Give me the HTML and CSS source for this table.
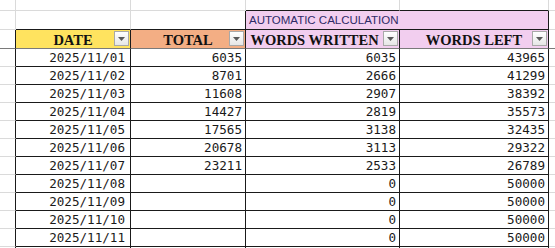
FILE: index.html
```html
<!DOCTYPE html>
<html>
<head>
<meta charset="utf-8">
<link rel="stylesheet" href="styles.css">
</head>
<body>
<div class="sheet">
  <!-- row 1 -->
  <div class="c"></div><div class="c"></div><div class="c"></div>
  <div class="c db"></div><div class="c db"></div><div class="c"></div>
  <!-- row 2 -->
  <div class="c"></div><div class="c db"></div><div class="c db dr"></div>
  <div class="c auto db dr">AUTOMATIC CALCULATION</div><div class="c"></div>
  <!-- row 3: headers -->
  <div class="c dr fz"></div>
  <div class="c h yellow dr fz"><span>DATE</span><i class="btn"><svg width="7" height="4" viewBox="0 0 7 4"><path d="M0 0H7L3.5 4Z"/></svg></i></div>
  <div class="c h salmon dr fz"><span>TOTAL</span><i class="btn"><svg width="7" height="4" viewBox="0 0 7 4"><path d="M0 0H7L3.5 4Z"/></svg></i></div>
  <div class="c h purple dr fz shift"><span>WORDS WRITTEN</span><i class="btn"><svg width="7" height="4" viewBox="0 0 7 4"><path d="M0 0H7L3.5 4Z"/></svg></i></div>
  <div class="c h purple dr fz"><span>WORDS LEFT</span><i class="btn"><svg width="7" height="4" viewBox="0 0 7 4"><path d="M0 0H7L3.5 4Z"/></svg></i></div>
  <div class="c fz"></div>

  <div class="c dr"></div><div class="c d dt">2025/11/01</div><div class="c d">6035</div><div class="c d">6035</div><div class="c d">43965</div><div class="c"></div>
  <div class="c dr"></div><div class="c d dt">2025/11/02</div><div class="c d">8701</div><div class="c d">2666</div><div class="c d">41299</div><div class="c"></div>
  <div class="c dr"></div><div class="c d dt">2025/11/03</div><div class="c d">11608</div><div class="c d">2907</div><div class="c d">38392</div><div class="c"></div>
  <div class="c dr"></div><div class="c d dt">2025/11/04</div><div class="c d">14427</div><div class="c d">2819</div><div class="c d">35573</div><div class="c"></div>
  <div class="c dr"></div><div class="c d dt">2025/11/05</div><div class="c d">17565</div><div class="c d">3138</div><div class="c d">32435</div><div class="c"></div>
  <div class="c dr"></div><div class="c d dt">2025/11/06</div><div class="c d">20678</div><div class="c d">3113</div><div class="c d">29322</div><div class="c"></div>
  <div class="c dr"></div><div class="c d dt">2025/11/07</div><div class="c d">23211</div><div class="c d">2533</div><div class="c d">26789</div><div class="c"></div>
  <div class="c dr"></div><div class="c d dt">2025/11/08</div><div class="c d"></div><div class="c d">0</div><div class="c d">50000</div><div class="c"></div>
  <div class="c dr"></div><div class="c d dt">2025/11/09</div><div class="c d"></div><div class="c d">0</div><div class="c d">50000</div><div class="c"></div>
  <div class="c dr"></div><div class="c d dt">2025/11/10</div><div class="c d"></div><div class="c d">0</div><div class="c d">50000</div><div class="c"></div>
  <div class="c dr"></div><div class="c d dt">2025/11/11</div><div class="c d"></div><div class="c d">0</div><div class="c d">50000</div><div class="c"></div>
  <div class="c dr"></div><div class="c d"></div><div class="c d"></div><div class="c d"></div><div class="c d"></div><div class="c"></div>
</div>
</body>
</html>
```
FILE: styles.css
```css
html, body {
  margin: 0;
  padding: 0;
  background: #ffffff;
  overflow: hidden;
  width: 555px;
  height: 248px;
}
.sheet {
  display: grid;
  grid-template-columns: 16px 115px 115px 154px 149px 20px;
  grid-template-rows: 11px 19px 19px repeat(12, 18px);
}
.c {
  box-sizing: border-box;
  border-right: 1px solid #dadada;
  border-bottom: 1px solid #dadada;
  position: relative;
  min-width: 0;
  overflow: visible;
}
.db { border-bottom-color: #1a1a1a; }
.dr { border-right-color: #1a1a1a; }
.fz { border-bottom-color: #7a7a7a; }

.auto {
  grid-column: span 2;
  background: #f2ceef;
  font-family: "Liberation Sans", Arial, sans-serif;
  font-size: 11.5px;
  color: #2e2a66;
  line-height: 18px;
  padding-left: 3px;
  white-space: nowrap;
}

.h {
  display: flex;
  align-items: center;
  justify-content: center;
  font-family: "Liberation Serif", "Times New Roman", serif;
  font-weight: bold;
  font-size: 14.5px;
  color: #111111;
  padding-top: 2px;
  white-space: nowrap;
}
.h.shift { padding-right: 16px; padding-left: 0; }
.yellow { background: #ffe35f; }
.salmon { background: #f3ae84; }
.purple { background: #f2ceef; }

.btn {
  position: absolute;
  right: 1px;
  top: 1px;
  width: 15px;
  height: 15px;
  box-sizing: border-box;
  border: 1px solid #a9a9a9;
  background: linear-gradient(#ffffff, #e6e6e6);
  display: flex;
  align-items: center;
  justify-content: center;
}
.btn svg { display: block; fill: #5a5a5a; }

.d {
  border-right-color: #1a1a1a;
  border-bottom-color: #1a1a1a;
  font-family: "DejaVu Sans Mono", "Liberation Mono", monospace;
  font-size: 12.6px;
  color: #1a1a1a;
  text-align: right;
  padding-right: 3px;
  line-height: 17px;
  white-space: nowrap;
}
.dt { padding-right: 5px; }
```
